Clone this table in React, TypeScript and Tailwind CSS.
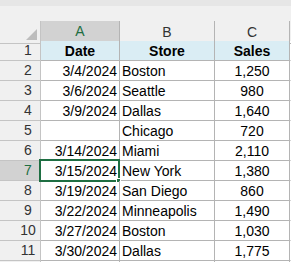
import type { ReactNode } from "react";

const rows: [string, string, string][] = [
  ["3/4/2024", "Boston", "1,250"],
  ["3/6/2024", "Seattle", "980"],
  ["3/9/2024", "Dallas", "1,640"],
  ["", "Chicago", "720"],
  ["3/14/2024", "Miami", "2,110"],
  ["3/15/2024", "New York", "1,380"],
  ["3/19/2024", "San Diego", "860"],
  ["3/22/2024", "Minneapolis", "1,490"],
  ["3/27/2024", "Boston", "1,030"],
  ["3/30/2024", "Dallas", "1,775"],
];

const grid = "grid grid-cols-[41px_79px_95px_75px_1fr]";

function RowHead({ n, active }: { n?: number; active?: boolean }) {
  return (
    <div
      className={`flex h-5 items-center justify-center border-b border-r border-[#c4c4c4] pl-4 text-[14px] ${
        active ? "bg-[#d2d2d2] text-[#1e6e42]" : "bg-[#f0f0f0] text-[#333]"
      }`}
    >
      {n}
    </div>
  );
}

function Cell({ children, className = "" }: { children?: ReactNode; className?: string }) {
  return (
    <div className={`flex h-5 items-center overflow-visible whitespace-nowrap border-b border-r border-[#b4b4b4] pt-px text-[14px] text-black ${className}`}>
      {children}
    </div>
  );
}

export default function App() {
  return (
    <div className="h-[262px] w-[291px] overflow-hidden bg-white font-['Liberation_Sans',Arial,sans-serif]">
      <div className="h-[6px] bg-[#e6e6e6]" />
      <div className="h-[15px] bg-[#f0f0f0]" />

      <div className={`${grid} h-5 bg-[#f0f0f0] text-[14px] text-[#333]`}>
        <div className="relative border-b border-r border-[#c4c4c4]">
          <div className="absolute bottom-[3px] right-[3px] h-0 w-0 border-b-[11px] border-l-[11px] border-b-[#bdbdbd] border-l-transparent" />
        </div>
        <div className="flex items-center justify-center border-b-2 border-r border-b-[#1e6e42] border-r-[#b4b4b4] bg-[#d2d2d2] text-[#1e6e42]">
          A
        </div>
        <div className="flex items-center justify-center border-b border-r border-[#b4b4b4]">B</div>
        <div className="flex items-center justify-center border-b border-r border-[#b4b4b4]">C</div>
        <div className="border-b border-[#b4b4b4]" />
      </div>

      <div className={grid}>
        <RowHead n={1} />
        <Cell className="justify-center bg-[#daedf4] font-bold">Date</Cell>
        <Cell className="justify-center bg-[#daedf4] font-bold">Store</Cell>
        <Cell className="justify-center bg-[#daedf4] font-bold">Sales</Cell>
        <div className="h-5 border-b border-[#d4d4d4]" />
      </div>

      {rows.map(([date, store, sales], i) => {
        const n = i + 2;
        const active = n === 7;
        return (
          <div key={n} className={grid}>
            <RowHead n={n} active={active} />
            <div className="relative">
              <Cell className="justify-end pr-[2px]">{date}</Cell>
              {active && (
                <div className="pointer-events-none absolute -left-[2px] -top-[2px] h-[23px] w-[81px] border-2 border-[#1e6e42]">
                  <div className="absolute -bottom-[3px] -right-[3px] h-[5px] w-[5px] border border-white bg-[#1e6e42]" />
                </div>
              )}
            </div>
            <Cell className="pl-[2px]">{store}</Cell>
            <Cell className="justify-center">{sales}</Cell>
            <div className="h-5 border-b border-[#d4d4d4]" />
          </div>
        );
      })}

      <div className={grid}>
        <RowHead />
        <Cell />
        <Cell />
        <Cell />
        <div />
      </div>
    </div>
  );
}
